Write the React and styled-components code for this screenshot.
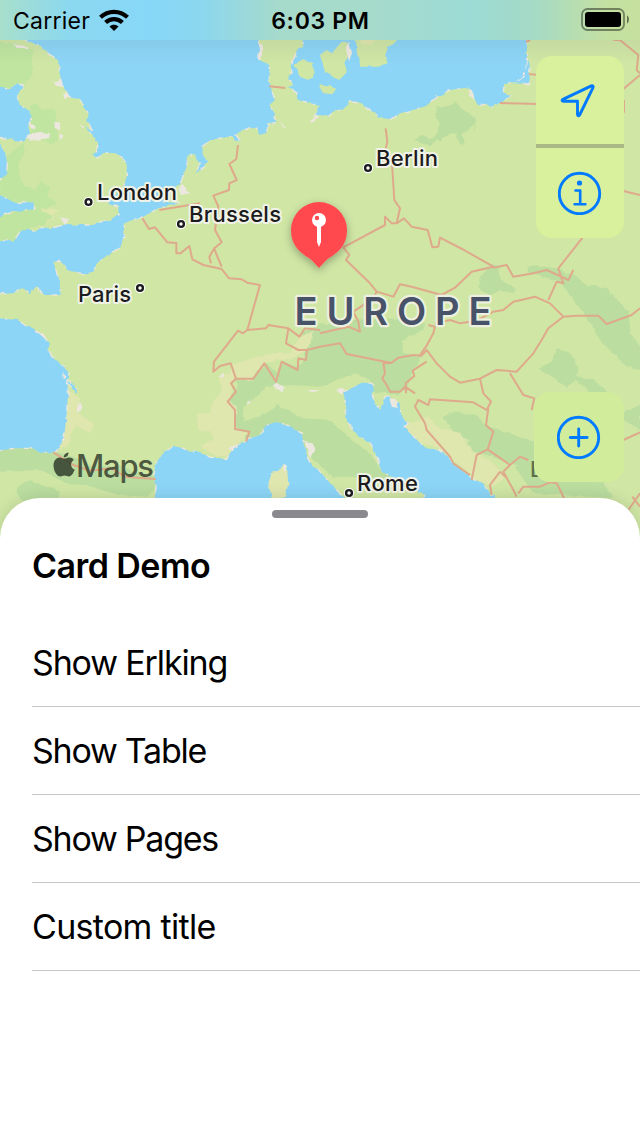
import React from "react";
import styled, { createGlobalStyle } from "styled-components";

const Global = createGlobalStyle`
  * { box-sizing: border-box; }
  body { margin: 0; background: #fff; font-family: Inter, "Liberation Sans", sans-serif; color: #000; }
`;
const Screen = styled.div`
  position: relative; width: 640px; height: 1136px; overflow: hidden;
  display: flex; flex-direction: column; background: #fff;
`;
const StatusBar = styled.header`
  position: relative; z-index: 2; height: 40px; flex: none;
  display: grid; grid-template-columns: 1fr auto 1fr; align-items: center;
  padding: 0 10px 0 13px; font-size: 23px; letter-spacing: 0.25px;
  background: linear-gradient(90deg, #a8dfcb 0, #8bd8f0 70px, #87d7f8 150px, #8bd7ef 200px, #a6dacb 280px, #a6dacb 370px, #9cdbd6 470px, #a5dac5 535px, #c4e0a2 605px, #c6e19e 640px);
`;
const Carrier = styled.div`display: flex; align-items: center; gap: 9px; padding-top: 1px;`;
const Clock = styled.div`font-weight: 600; letter-spacing: 0.7px; padding: 1px 2px 0 0;`;
const BatterySlot = styled.div`display: flex; justify-content: flex-end;`;
const MapArea = styled.main`
  position: relative; z-index: 0; flex: none; height: 458px;
  display: flex; flex-direction: column; justify-content: space-between; align-items: flex-end;
  padding: 16px 16px 16px 0;
`;
const MapDrawing = styled.svg`position: absolute; z-index: -1; left: 0; top: -40px; display: block;`;
const ControlPanel = styled.div`
  width: ${(p) => p.$wide || 88}px; border-radius: 16px; overflow: hidden;
  display: flex; flex-direction: column; background: ${(p) => p.$tone};
`;
const ControlButton = styled.button`
  border: 0; padding: 0; background: transparent; height: ${(p) => p.$tall}px;
  display: flex; align-items: center; justify-content: center; color: #007aff;
  & + & { border-top: 4px solid #aaba86; }
`;
const Card = styled.section`
  position: relative; z-index: 3; flex: 1; background: #fff; border-radius: 40px 40px 0 0;
  display: flex; flex-direction: column; padding: 12px 0 0 32px;
  box-shadow: 0 0 16px rgba(0, 0, 0, 0.12);
`;
const Grabber = styled.div`width: 96px; height: 8px; border-radius: 4px; background: #8a898e; margin-left: 240px;`;
const CardTitle = styled.h1`margin: 24px 0 29px; height: 48px; line-height: 48px; font-size: 34px; font-weight: 600; letter-spacing: -0.55px;`;
const Row = styled.div`
  height: 88px; border-bottom: 1px solid #c6c6c8; display: flex; align-items: center;
  font-size: 34px; letter-spacing: ${(p) => p.$tracking}px; padding-bottom: 1px;
`;

const seas = [
  // North Sea and English Channel
  "M75 120L100 128 130 142 152 165 174 180 178 215 188 262 208 290 240 300 250 322 266 340 262 362 276 390 240 378 258 385 276 405 294 432 290 455 275 465 292 474 312 458 350 460 370 475 381 495 378 540 365 572 330 592 325 612 358 622 358 640 330 660 290 668 280 675 235 675 200 672 155 685 125 682 105 695 80 685 60 695 40 725 0 720H-20V882H0L40 880 65 865 90 880 110 862 130 885 182 885 178 840 160 785 190 785 200 810 250 822 280 815 290 790 330 760 360 745 372 710 372 670 400 660 430 650 475 625 540 610 490 605 515 575 545 540 560 500 565 465 585 462 590 480 600 490 588 520 610 500 625 485 607 460 607 440 630 420 700 408 710 425 722 425 708 405 725 390 770 383 778 402 800 395 805 370 830 365 822 350 826 335 808 315 825 300 815 270 808 240 808 195 778 180 778 90H75Z",
  // Bay of Biscay
  "M-20 955H0L50 960 85 980 120 1000 150 1030 145 1050 165 1080 190 1095 208 1130 200 1145 205 1170 200 1240 195 1290 185 1330 165 1355 120 1358 90 1345 40 1345 0 1352H-20Z",
  "M201 1140L222 1152 231 1178 226 1180 215 1158 200 1150Z",
  // Irish Sea and Bristol Channel
  "M-20 260H0L30 265 55 248 70 255 52 290 60 315 85 330 95 350 85 380 90 400 75 425 45 420 0 412H-20Z",
  "M-20 430H0L15 455 22 490 20 520 0 540H-20Z",
  "M-20 585H0L50 610 75 605 100 608 105 627 60 635 40 633 15 640 0 653H-20Z",
  // Baltic
  "M905 90L910 140 890 150 885 170 872 190 875 215 865 230 880 255 865 262 890 275 892 300 930 310 960 318 942 348 960 345 985 350 1000 335 1030 328 1050 305 1085 310 1120 340 1150 355 1175 358 1200 340 1240 330 1278 318 1310 290 1350 270 1410 262 1425 300 1435 312 1460 315 1475 322 1505 305 1535 285 1510 278 1512 252 1540 250 1588 252 1590 200 1580 160 1582 125 1578 90Z",
  // Western Mediterranean
  "M460 1560L465 1490 468 1460 462 1420 470 1385 490 1360 520 1338 550 1345 570 1355 600 1355 630 1375 680 1375 700 1345 740 1318 780 1305 795 1280 825 1265 870 1278 905 1300 912 1340 930 1390 960 1415 1000 1460 1035 1495 1100 1560Z",
  // Adriatic
  "M1030 1175L1045 1170 1085 1148 1120 1150 1125 1170 1115 1180 1125 1210 1138 1228 1155 1190 1170 1185 1175 1210 1198 1210 1205 1250 1225 1270 1215 1280 1260 1330 1280 1345 1320 1350 1345 1370 1365 1395 1410 1430 1450 1450 1470 1485 1485 1485V1560H1240L1275 1485 1260 1475 1200 1458 1175 1430 1145 1415 1130 1370 1115 1335 1065 1300 1035 1255 1040 1230Z",
];
const islands = [
  "M880 195L905 180 940 190 940 230 925 240 900 230Z",
  "M960 165L980 150 995 160 1025 125 1045 125 1050 155 1035 185 1040 215 1020 240 1005 235 975 215Z",
  "M1053 90H1188L1185 130 1165 140 1155 165 1163 190 1135 200 1080 200 1078 170Z",
  "M955 255L990 255 1008 270 1000 283 970 280Z",
];
const forests = [
  "M0 125L45 130 100 150 95 190 100 220 85 240 70 262 50 248 30 262 0 260Z",
  "M90 315L105 308 125 330 165 328 175 420 150 432 120 415 75 420 95 390 90 350Z",
  "M20 470L75 425 75 460 55 490 60 540 80 560 110 570 120 545 150 560 145 590 175 610 120 630 165 650 130 675 80 685 40 725 0 720V650L50 635 110 625 100 608 50 610 0 585V540L22 510Z",
];
const deepForests = [
  "M1308 320L1345 318 1370 307 1385 328 1425 350 1428 385 1420 395 1428 370 1388 405 1391 435 1375 430 1370 400 1340 405 1320 425 1310 415 1290 440 1245 420 1265 405 1290 418 1308 405 1320 370 1306 345Z",
  "M905 1000L960 970 1040 978 1060 960 1210 955 1275 970 1270 990 1205 1020 1210 1060 1265 1068 1240 1120 1220 1165 1190 1185 1155 1175 1125 1180 1110 1140 1060 1120 990 1150 960 1160 880 1155 800 1160 730 1225 730 1265 800 1240 830 1215 910 1255 990 1260 1045 1310 1115 1365 1145 1415 1175 1430 1190 1450 1100 1445 1060 1430 1000 1430 940 1380 912 1340 905 1300 870 1278 825 1265 780 1305 740 1318 705 1285 710 1220 680 1205 715 1155 700 1130 760 1140 800 1090 830 1120 850 1085 890 1100 915 1080Z",
  "M1440 830L1465 805 1480 790 1498 805 1500 840 1550 865 1540 880 1500 870 1465 890 1435 860Z",
  "M1583 795L1640 800 1690 810 1712 840 1760 860 1780 855 1820 865 1885 935 1892 1000 1920 1040V1110L1880 1100 1830 1050 1800 1020 1760 950 1720 900 1680 845 1630 830 1583 815Z",
  "M1700 820L1725 825 1820 910 1870 940 1880 1010 1860 1005 1785 935 1745 910Z",
  "M1670 1042L1710 1060 1735 1100 1725 1140 1700 1165 1665 1135 1615 1105 1655 1085Z",
  "M1330 1250L1360 1237 1430 1245 1450 1270 1500 1290 1555 1310 1620 1330 1640 1400 1560 1400 1490 1375 1445 1360 1385 1350 1410 1320 1370 1310Z",
  "M0 1345L45 1345 90 1345 120 1358 165 1355 220 1370 280 1400 350 1395 420 1420 468 1430 468 1465 445 1490 350 1485 280 1460 200 1450 120 1410 0 1415Z",
  "M50 1465L85 1438 140 1460 180 1475 170 1500 60 1500Z",
  "M1545 1400L1600 1380 1675 1400 1705 1440 1810 1450 1840 1495 1770 1490 1600 1480Z",
  "M1865 1240L1920 1215V1290L1870 1260Z M1715 1125L1780 1140 1850 1200 1770 1180Z",
];
const drylands = [
  "M695 1095L770 1070 820 1060 870 1060 900 1010 940 990 935 1030 910 1055 870 1080 830 1080 790 1090 750 1140 700 1140 690 1205 710 1220 705 1280 745 1300 700 1345 680 1370 640 1365 600 1335 640 1320 635 1295 595 1290 590 1240 630 1240 640 1205 665 1170 655 1130 690 1115Z",
  "M205 1170L240 1195 230 1235 285 1275 270 1300 225 1275 205 1335 170 1350 190 1310Z",
  "M1210 1280L1285 1250 1315 1280 1380 1300 1420 1355 1480 1390 1515 1430 1480 1460 1430 1440 1370 1390 1310 1340 1260 1330Z",
  "M1080 120H1125L1115 135 1085 133Z M815 1495L805 1450 815 1420 835 1412 850 1392 862 1415 865 1450 855 1495Z",
  "M120 625L165 650 130 675 175 630Z",
];
const sands = [
  "M160 248L185 237 190 262 172 258Z M190 280L210 288 192 298Z M162 365L180 368 180 390 165 385Z M80 405L120 395 148 400 148 415 90 422Z M178 400L190 410 180 420Z M87 370L110 378 108 388 92 384Z",
  "M778 125L788 135 785 180 775 180Z M870 180L884 182 876 195Z M930 365L955 347 960 350 936 370Z M835 362L860 385 850 382Z",
  "M1037 150L1048 127 1056 160 1048 180Z M1408 265L1425 300 1407 290Z M180 655L208 660 195 675Z M535 565L545 550 570 580 545 585Z",
  "M820 1155L830 1148 855 1165 845 1180Z M740 1205L755 1198 750 1212Z M912 1325L938 1330 945 1345 930 1375Z M920 1170L960 1170 940 1177Z M230 1225L240 1210 248 1222 237 1238Z M1008 1170L1035 1165 1025 1185Z M1168 1195L1185 1198 1192 1225 1175 1220Z M680 1345L725 1328 695 1350Z M850 1392L860 1396 858 1412 850 1412Z M116 1000L130 1000 145 1025Z",
  "M36 133L70 137 88 146 65 148Z M185 1120L197 1130 190 1138Z M655 1130L672 1118 670 1132Z M810 370L830 365 822 372Z",
];
const borders = [
  "M808 259L856 264", "M714 435L709 477 688 492 710 540 688 550 687 570 640 587 655 620 645 690 665 727 643 745 650 765 665 800",
  "M478 630L600 610", "M427 655L447 687 465 682 502 727 529 729 529 760 542 760 568 738 577 778 610 795 665 807 687 835 725 838 742 848 780 855 742 990 798 985 805 975 865 985 898 1010 915 985 960 990",
  "M643 745L628 770 633 790", "M742 990L728 1000 714 992 642 1085 640 1115 660 1098 692 1090 708 1136 760 1136 793 1090 828 1145 845 1085 893 1110 895 1075 918 1080 921 1050 960 1040 1020 1030 1040 1062 1174 1089 1195 1073 1240 1065 1265 1067 1280 1050 1310 1090 1350 1130 1380 1148 1440 1136 1490 1110 1550 1115 1600 1060 1625 1020 1645 985 1690 950",
  "M865 985L858 1030 895 1050 921 1050", "M708 1136L693 1150 708 1175 683 1205 705 1230 705 1287 748 1295 738 1325",
  "M160 1357L220 1395 270 1412 335 1405 375 1430 467 1437",
  "M1157 385L1162 425 1155 455 1175 475 1183 600 1200 625 1190 670 1175 670 1155 650 1155 675 1030 742 1048 765 1038 780 1110 850 1130 875 1180 890 1200 853 1235 860 1325 885 1365 863 1415 815 1480 800 1392 750 1320 713 1315 740 1297 742 1283 690 1235 680 1212 655 1190 670",
  "M1480 803L1520 795 1540 830 1600 820 1640 810 1705 840 1720 810",
  "M1130 875L1120 895 1060 935 1075 965 1080 995 1045 980 960 1000",
  "M1285 975L1305 980 1300 1000 1278 1040 1260 1065M1305 970L1350 960 1380 970 1430 962 1480 935 1510 930 1540 905 1605 890 1650 910 1690 950 1730 947 1795 947 1820 972 1895 945 1920 925M1645 900L1670 845 1690 850 1675 805 1750 710",
  "M1174 1089L1150 1090 1155 1120 1147 1135 1160 1155 1170 1175 1200 1175 1215 1160 1245 1180M1215 1160L1217 1172M1218 1180L1217 1150 1243 1128 1238 1112 1280 1085",
  "M1440 1136L1450 1180 1473 1205 1460 1230 1420 1207 1290 1198 1285 1215 1255 1200 1245 1220 1275 1270 1280 1290 1350 1370 1360 1390M1465 1225L1458 1275 1480 1295 1463 1348 1430 1365 1415 1440M1463 1348L1530 1395 1510 1415 1540 1470 1550 1490M1530 1395L1560 1370 1585 1380",
  "M1530 1120L1570 1185 1603 1195 1595 1230M1360 1390L1410 1425M1500 1415L1470 1455 1475 1485M1500 1415L1515 1430M1555 1480L1570 1460 1620 1460 1650 1447 1670 1449 1695 1500",
  "M1500 309L1620 312M1587 222L1620 226M1578 126L1590 120M1840 120H1860L1915 165 1910 210 1920 220M1920 225L1870 267M1872 300V338M1870 573L1920 585M1870 1320L1920 1297M1920 1480L1885 1530M1897 1490L1920 1520",
];

const cities = [
  { name: "London", x: 97, y: 200, width: 80, dot: [88.5, 202] },
  { name: "Brussels", x: 189, y: 222, width: 92, dot: [181, 224] },
  { name: "Berlin", x: 376, y: 166, width: 62, dot: [368, 168] },
  { name: "Paris", x: 78, y: 302, width: 53, dot: [140, 288] },
  { name: "Rome", x: 357, y: 491, width: 61, dot: [349, 493] },
];

function Shapes({ list, fill }) {
  return list.map((d) => <path key={d} d={d} fill={fill} />);
}

function EuropeMap() {
  return (
    <MapDrawing width="640" height="540" viewBox="0 0 640 540">
      <defs>
        <filter id="rough" filterUnits="userSpaceOnUse" x="-10" y="-10" width="660" height="560">
          <feTurbulence type="fractalNoise" baseFrequency="0.13" numOctaves="2" seed="4" result="noise" />
          <feDisplacementMap in="SourceGraphic" in2="noise" scale="3.5" xChannelSelector="R" yChannelSelector="G" />
        </filter>
        <filter id="pinShadow" x="-50%" y="-50%" width="200%" height="200%">
          <feDropShadow dx="0" dy="3" stdDeviation="4" floodOpacity="0.3" />
        </filter>
        <linearGradient id="topShade" x1="0" y1="0" x2="0" y2="1">
          <stop offset="0" stopColor="#555" stopOpacity="0.08" />
          <stop offset="1" stopColor="#555" stopOpacity="0" />
        </linearGradient>
      </defs>
      <rect width="640" height="540" fill="#cfe6a5" />
      <g filter="url(#rough)">
        <rect x="-10" y="-10" width="660" height="560" fill="#cfe6a5" />
        <g transform="scale(0.333333)">
          <Shapes list={forests} fill="#bfe5a0" />
          <Shapes list={deepForests} fill="#bbdd9f" />
          <Shapes list={drylands} fill="#dfe6ae" />
          <g stroke="#ece7dd" strokeWidth="4" strokeDasharray="14 22 6 40 24 30"><Shapes list={seas} fill="#8cd5f7" /></g>
          <Shapes list={islands} fill="#cfe6a5" />
          <Shapes list={drylands.slice(3, 4)} fill="#dfe6ae" />
          <Shapes list={sands} fill="#ece7df" />
          <path d="M1550 250L1570 230 1581 200 1583 160" fill="none" stroke="#ece7df" strokeWidth="3" />
        </g>
      </g>
      <g transform="scale(0.333333)" fill="none" stroke="#dfa98b" strokeWidth="6" strokeLinejoin="round">
        {borders.map((d) => <path key={d} d={d} />)}
      </g>
      <rect y="40" width="640" height="24" fill="url(#topShade)" />
      <g fontFamily="Inter, sans-serif" strokeLinejoin="round">
        {cities.map((c) => (
          <g key={c.name}>
            <circle cx={c.dot[0]} cy={c.dot[1]} r="5.2" fill="#fff" />
            <circle cx={c.dot[0]} cy={c.dot[1]} r="2.9" fill="#fff" stroke="#1c1c1e" strokeWidth="2.4" />
            <text x={c.x} y={c.y} textLength={c.width} fontSize="22" fontWeight="500" fill="#1c1c1e" stroke="#f1f3e8" strokeWidth="4" paintOrder="stroke">{c.name}</text>
          </g>
        ))}
        <text x="294.5" y="325" textLength="197" fontSize="38" fontWeight="600" fill="#485269" stroke="#edf0df" strokeWidth="4.5" paintOrder="stroke">EUROPE</text>
        <text x="530" y="477" fontSize="22" fontWeight="500" fill="#5b7048">L</text>
        <text x="76" y="476.5" textLength="78" fontSize="31" fontWeight="500" fill="#35402e" fillOpacity="0.85">Maps</text>
      </g>
      <g transform="translate(53.5 452.5)" fill="#35402e" fillOpacity="0.87">
        <path d="M10.5 6.3C12 6.3 13.500 5 15.500 5c2 0 3.700.8 4.800 2.400-4 2.400-3.400 8 .9 9.700-1 3-3.200 7-5.700 7-1.700 0-2.300-1-4.300-1s-2.700 1-4.300 1C3.500 24.100 0 18.500 0 13 0 8 3 5 6.200 5c1.900 0 3.200 1.300 4.300 1.300ZM10.300 4.900C10.200 2.200 12.400.1 15 0c.3 2.600-2 5-4.700 4.900Z" />
      </g>
      <g filter="url(#pinShadow)">
        <path d="M319 268L312.500 261C308 256 291 251 291 230a28 28 0 0 1 56 0C347 251 330 256 325.500 261Z" fill="#ff4a50" />
      </g>
      <path d="M317 226h4v16l-2 5-2-5Z" fill="#fff" />
      <circle cx="319" cy="220" r="7" fill="#fff" />
      <circle cx="317" cy="218" r="2.200" fill="#ff4a50" />
    </MapDrawing>
  );
}

const WifiIcon = () => (
  <svg width="30" height="23" viewBox="0 0 30 23" fill="none" stroke="#000" strokeWidth="4.200">
    <path d="M1.500 8.300C9 1 21 1 28.500 8.300" />
    <path d="M6.600 13.600c4.800-4.700 12-4.700 16.800 0" />
    <path d="M10.500 17.600c2.600-2.600 6.400-2.600 9 0L15 22Z" fill="#000" stroke="none" />
  </svg>
);
const BatteryIcon = () => (
  <svg width="49" height="24" viewBox="0 0 49 24">
    <rect x="1" y="1" width="42" height="21" rx="5.500" fill="none" stroke="#000" strokeOpacity=".42" strokeWidth="1.800" />
    <rect x="4" y="4" width="36" height="15" rx="3" />
    <path d="M46 7.500c2.500 1 2.500 7 0 8Z" fillOpacity=".5" />
  </svg>
);
const ArrowIcon = () => (
  <svg width="44" height="44" viewBox="0 0 44 44" fill="none" stroke="currentColor" strokeWidth="2.900" strokeLinejoin="round">
    <path d="M4.900 21.400L33.300 7.900c1.400-.6 2.300.2 1.700 1.700L21.600 37c-.5 1.200-2.100 1-2.100-.4V23.300H5.400c-1.500 0-1.800-1.300-.5-1.900Z" />
  </svg>
);
const InfoIcon = () => (
  <svg width="44" height="44" viewBox="0 0 44 44" fill="none" stroke="currentColor" strokeWidth="2.900">
    <circle cx="21.500" cy="22.500" r="20.200" />
    <circle cx="21.500" cy="12" r="2.600" fill="currentColor" stroke="none" />
    <path d="M17.500 19.500h4.700V33.200M16.600 33.200h10.800" strokeWidth="2.600" strokeLinecap="round" strokeLinejoin="round" />
  </svg>
);
const PlusIcon = () => (
  <svg width="44" height="44" viewBox="0 0 44 44" fill="none" stroke="currentColor" strokeWidth="2.900" strokeLinecap="round">
    <circle cx="21.500" cy="22.500" r="20.200" />
    <path d="M13.300 22.500h16.800M21.700 14v17" />
  </svg>
);

const rows = [
  { label: "Show Erlking", tracking: -1.15 },
  { label: "Show Table", tracking: -1.25 },
  { label: "Show Pages", tracking: -1.25 },
  { label: "Custom title", tracking: -0.7 },
];

export default function App() {
  return (
    <Screen>
      <Global />
      <StatusBar>
        <Carrier>Carrier<WifiIcon /></Carrier>
        <Clock>6:03 PM</Clock>
        <BatterySlot><BatteryIcon /></BatterySlot>
      </StatusBar>
      <MapArea>
        <EuropeMap />
        <ControlPanel $tone="#d9f09d">
          <ControlButton $tall={88} aria-label="Locate"><ArrowIcon /></ControlButton>
          <ControlButton $tall={94} aria-label="Info"><InfoIcon /></ControlButton>
        </ControlPanel>
        <ControlPanel $tone="#d1ed9c" $wide={90}>
          <ControlButton $tall={90} aria-label="Add"><PlusIcon /></ControlButton>
        </ControlPanel>
      </MapArea>
      <Card>
        <Grabber />
        <CardTitle>Card Demo</CardTitle>
        {rows.map((r) => <Row key={r.label} $tracking={r.tracking}>{r.label}</Row>)}
      </Card>
    </Screen>
  );
}
